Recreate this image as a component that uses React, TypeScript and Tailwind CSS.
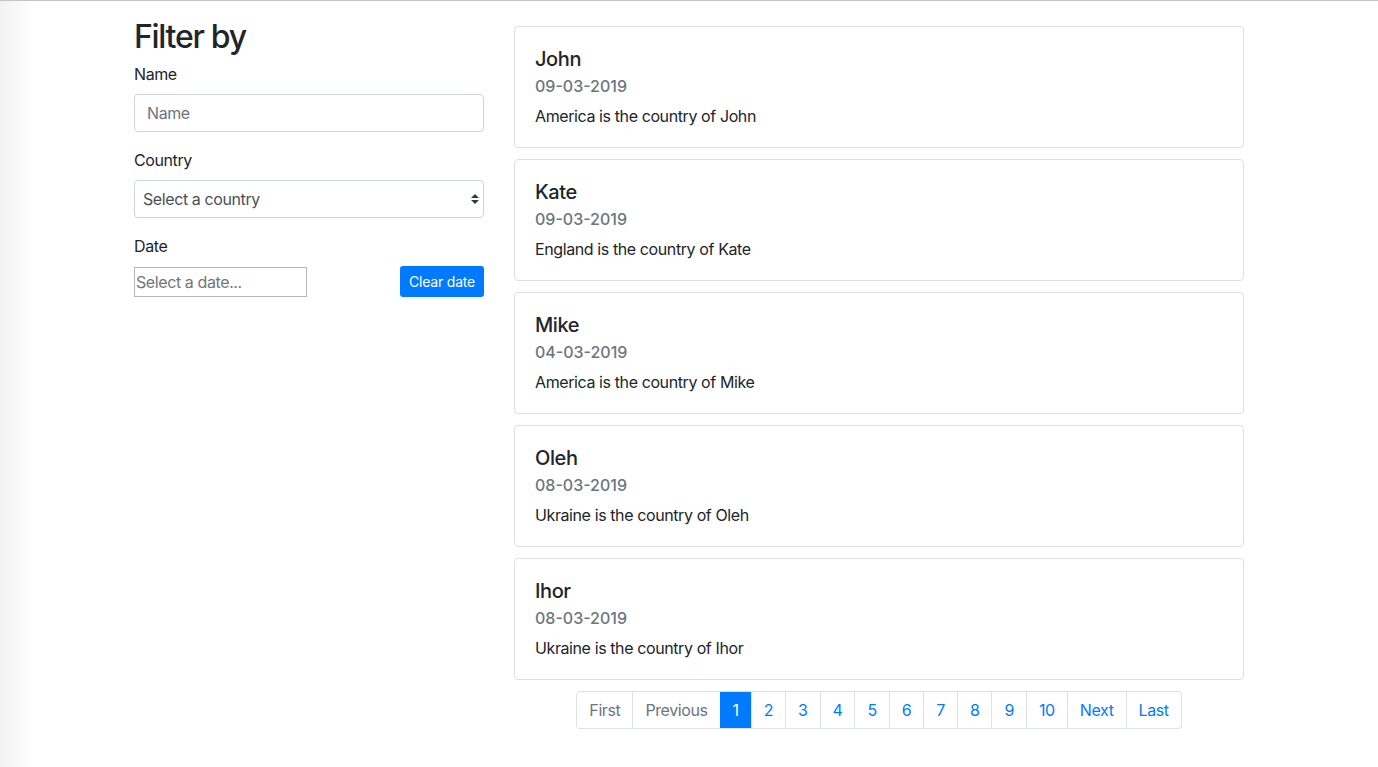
const people = [
  { name: "John", date: "09-03-2019", country: "America" },
  { name: "Kate", date: "09-03-2019", country: "England" },
  { name: "Mike", date: "04-03-2019", country: "America" },
  { name: "Oleh", date: "08-03-2019", country: "Ukraine" },
  { name: "Ihor", date: "08-03-2019", country: "Ukraine" },
];

const pages = ["1", "2", "3", "4", "5", "6", "7", "8", "9", "10"];

function PersonCard({ name, date, country }: { name: string; date: string; country: string }) {
  return (
    <div className="mb-[11px] rounded-[4px] border border-[#dfdfdf] bg-white px-5 pt-5 pb-[19px]">
      <h5 className="text-[20px] leading-[24px] font-medium tracking-[-0.02em] text-[#212529]">{name}</h5>
      <p className="mt-[3px] text-[16px] leading-[24px] font-medium tracking-normal text-[#6c757d]">{date}</p>
      <p className="mt-[6px] text-[16px] leading-[24px] text-[#212529]">
        {country} is the country of {name}
      </p>
    </div>
  );
}

function Pagination() {
  const base = "flex h-[36px] items-center border-l border-[#dee2e6] px-3 text-[16px]";
  return (
    <nav className="flex justify-center">
      <ul className="flex overflow-hidden rounded-[4px] border border-l-0 border-[#dee2e6]">
        <li className={`${base} text-[#6c757d]`}>First</li>
        <li className={`${base} text-[#6c757d]`}>Previous</li>
        {pages.map((p, i) => (
          <li
            key={p}
            className={
              i === 0
                ? "flex h-[36px] items-center border-l border-[#007bff] bg-[#007bff] px-3 text-[16px] text-white"
                : `${base} text-[#007bff]`
            }
          >
            {p}
          </li>
        ))}
        <li className={`${base} text-[#007bff]`}>Next</li>
        <li className={`${base} text-[#007bff]`}>Last</li>
      </ul>
    </nav>
  );
}

export default function App() {
  return (
    <div
      className="min-h-[767px] border-t border-[#c4c4c4] bg-gradient-to-r from-[#f2f2f2] from-0% to-white to-[2.5%] tracking-[-0.025em] text-[#212529]"
      style={{ fontFamily: "Inter, 'Noto Sans', sans-serif" }}
    >
      <div className="mx-auto flex w-[1140px]">
        <aside className="w-[380px] px-[15px] pt-[17px]">
          <h2 className="mb-[6px] text-[32px] leading-[38px] font-medium tracking-[-0.04em]">Filter by</h2>

          <div className="mb-4">
            <label className="mb-2 block text-[16px] leading-[24px]">Name</label>
            <input
              placeholder="Name"
              className="h-[38px] w-full rounded-[4px] border border-[#ced4da] px-3 text-[16px] placeholder:text-[#6c757d] outline-none"
            />
          </div>

          <div className="mb-4">
            <label className="mb-2 block text-[16px] leading-[24px]">Country</label>
            <div className="relative">
              <select className="h-[38px] w-full appearance-none rounded-[4px] border border-[#ced4da] bg-white pl-[8px] text-[16px] tracking-[-0.025em] text-[#495057] outline-none">
                <option>Select a country</option>
              </select>
              <svg
                viewBox="0 0 4 5"
                className="pointer-events-none absolute top-1/2 right-[5px] h-[12px] w-[8px] -translate-y-1/2"
              >
                <path d="M2 0L0 2h4zm0 5L0 3h4z" fill="#343a40" />
              </svg>
            </div>
          </div>

          <div>
            <label className="mb-2 block text-[16px] leading-[24px]">Date</label>
            <div className="flex items-center justify-between">
              <input
                placeholder="Select a date..."
                className="h-[30px] w-[173px] border border-[#b5b5b5] px-[1px] text-[16px] tracking-[-0.025em] placeholder:text-[#757575] outline-none"
              />
              <button className="h-[31px] rounded-[3px] bg-[#007bff] px-[9px] text-[14px] tracking-[-0.015em] text-white">
                Clear date
              </button>
            </div>
          </div>
        </aside>

        <main className="w-[760px] px-[15px] pt-[25px]">
          {people.map((p) => (
            <PersonCard key={p.name} {...p} />
          ))}
          <Pagination />
        </main>
      </div>
    </div>
  );
}
